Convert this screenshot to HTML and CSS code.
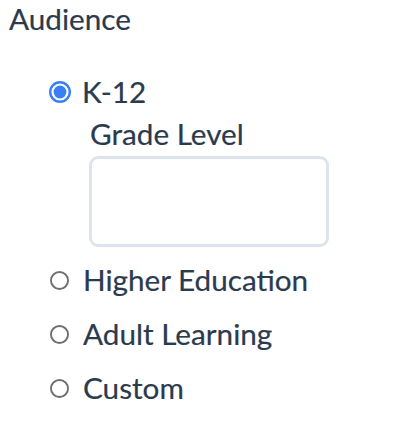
FILE: index.html
```html
<!DOCTYPE html>
<html>
<head>
<meta charset="utf-8">
<link rel="stylesheet" href="styles.css">
</head>
<body>
<div class="field">
  <div class="legend">Audience</div>
  <div class="options">
    <div class="option">
      <svg class="radio checked" viewBox="0 0 22 22"><circle cx="11" cy="11" r="9.8" fill="#fff" stroke="#3a7ff6" stroke-width="2.4"/><circle cx="11" cy="11" r="6.4" fill="#3a7ff6"/></svg>
      <span class="text">K-12</span>
    </div>
    <div class="sub">
      <div class="sub-label">Grade Level</div>
      <div class="input"></div>
    </div>
    <div class="option">
      <svg class="radio" viewBox="0 0 20 20"><circle cx="10" cy="10" r="9" fill="#fff" stroke="#6f6f6f" stroke-width="2"/></svg>
      <span class="text">Higher Education</span>
    </div>
    <div class="option">
      <svg class="radio" viewBox="0 0 20 20"><circle cx="10" cy="10" r="9" fill="#fff" stroke="#6f6f6f" stroke-width="2"/></svg>
      <span class="text">Adult Learning</span>
    </div>
    <div class="option">
      <svg class="radio" viewBox="0 0 20 20"><circle cx="10" cy="10" r="9" fill="#fff" stroke="#6f6f6f" stroke-width="2"/></svg>
      <span class="text">Custom</span>
    </div>
  </div>
</div>
</body>
</html>
```
FILE: styles.css
```css
html, body {
  margin: 0;
  padding: 0;
  background: #ffffff;
}
body {
  font-family: Lato, "Open Sans", sans-serif;
  color: #2b3a4d;
  font-size: 29.7px;
  line-height: 32px;
  -webkit-text-stroke: 0.2px #2b3a4d;
}
.field {
  padding: 3px 10px 0 9px;
}
.legend {
  height: 32px;
}
.options {
  margin-top: 41px;
  padding-left: 41px;
  display: flex;
  flex-direction: column;
}
.option {
  display: flex;
  align-items: center;
  height: 54px;
}
.option:first-child {
  height: 32px;
}
.radio {
  display: block;
  flex: 0 0 19px;
  width: 19px;
  height: 19px;
  margin-right: 14px;
}
.radio.checked {
  flex: 0 0 22px;
  width: 22px;
  height: 22px;
  margin-left: -1px;
  margin-right: 11px;
}
.sub {
  padding-left: 40px;
  padding-top: 10px;
}
.sub-label {
  height: 32px;
}
.input {
  box-sizing: border-box;
  margin-top: 6px;
  margin-left: -1px;
  width: 240px;
  height: 91px;
  border: 3px solid #dde4ec;
  border-radius: 9px;
  background: #fff;
  margin-bottom: 6px;
}
```
